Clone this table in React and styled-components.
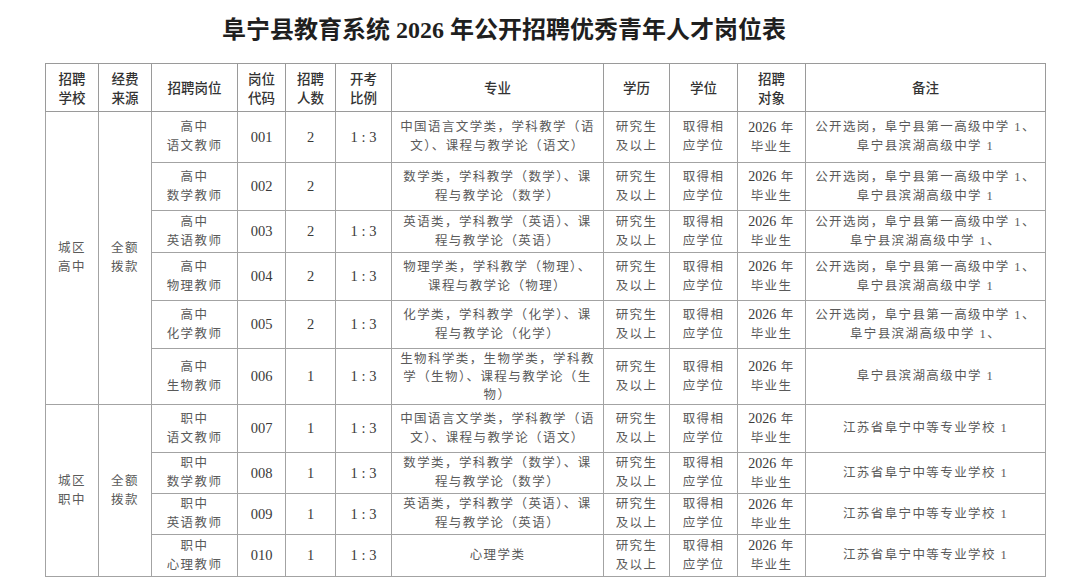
import React from 'react';
import styled, { createGlobalStyle } from 'styled-components';

const GlobalStyle = createGlobalStyle`
  html, body {
    margin: 0;
    padding: 0;
    background: #ffffff;
  }
  body {
    font-family: "Liberation Serif", "Noto Sans CJK SC", serif;
  }
`;

const Page = styled.div`
  width: 1080px;
  height: 586px;
  overflow: hidden;
  background: #fff;
`;

const Title = styled.h1`
  margin: 0;
  box-sizing: border-box;
  height: 63px;
  padding: 17px 0 0 222px;
  font-family: "Liberation Serif", "Noto Sans CJK SC", serif;
  font-size: 24px;
  line-height: 26px;
  font-weight: 700;
  color: #1f1f1f;
  white-space: nowrap;
`;

const Table = styled.table`
  margin-left: 45px;
  width: 1000px;
  border-collapse: collapse;
  table-layout: fixed;
  border: 1px solid #8c8c8c;
`;

const HeadCell = styled.th`
  border: 1px solid #9a9a9a;
  padding: 0 2px;
  font-family: "Noto Sans CJK SC", sans-serif;
  font-size: 13.5px;
  font-weight: 500;
  line-height: 19px;
  color: #333;
  text-align: center;
  vertical-align: middle;
  white-space: pre-line;
`;

const Cell = styled.td`
  border: 1px solid #a3a3a3;
  padding: 0 2px;
  font-family: "Liberation Serif", "Noto Sans CJK SC", serif;
  font-size: 12.5px;
  letter-spacing: 1.4px;
  line-height: ${p => p.$tight ? '18px' : '19px'};
  color: #5a5a5a;
  text-align: center;
  vertical-align: middle;
  white-space: pre-line;
`;

const Num = styled.td`
  border: 1px solid #a3a3a3;
  padding: 0;
  font-family: "Liberation Serif", serif;
  font-size: 14.5px;
  color: #3a3a3a;
  text-align: center;
  vertical-align: middle;
  white-space: nowrap;
`;

const Year = styled.span`
  font-family: "Liberation Serif", serif;
  font-size: 14px;
  letter-spacing: 0;
  color: #3a3a3a;
`;

const Row = styled.tr`
  height: ${p => p.$h}px;
`;

const widths = [53, 53, 86, 48, 50, 56, 212, 66, 68, 68, 240];

const headers = [
  '招聘\n学校', '经费\n来源', '招聘岗位', '岗位\n代码', '招聘\n人数', '开考\n比例',
  '专业', '学历', '学位', '招聘\n对象', '备注',
];

const CHINESE = '中国语言文学类，学科教学（语\n文）、课程与教学论（语文）';
const MATH = '数学类，学科教学（数学）、课\n程与教学论（数学）';
const ENGLISH = '英语类，学科教学（英语）、课\n程与教学论（英语）';
const NOTE_A = '公开选岗，阜宁县第一高级中学 1、\n阜宁县滨湖高级中学 1';
const NOTE_B = '公开选岗，阜宁县第一高级中学 1、\n阜宁县滨湖高级中学 1、';
const NOTE_VOC = '江苏省阜宁中等专业学校 1';

const groups = [
  {
    school: '城区\n高中',
    fund: '全额\n拨款',
    rows: [
      { post: '高中\n语文教师', code: '001', num: '2', ratio: '1 : 3', major: CHINESE, note: NOTE_A, h: 51 },
      { post: '高中\n数学教师', code: '002', num: '2', ratio: '', major: MATH, note: NOTE_A, h: 48 },
      { post: '高中\n英语教师', code: '003', num: '2', ratio: '1 : 3', major: ENGLISH, note: NOTE_B, h: 42 },
      { post: '高中\n物理教师', code: '004', num: '2', ratio: '1 : 3', major: '物理学类，学科教学（物理）、\n课程与教学论（物理）', note: NOTE_A, h: 48 },
      { post: '高中\n化学教师', code: '005', num: '2', ratio: '1 : 3', major: '化学类，学科教学（化学）、课\n程与教学论（化学）', note: NOTE_B, h: 48 },
      { post: '高中\n生物教师', code: '006', num: '1', ratio: '1 : 3', major: '生物科学类，生物学类，学科教\n学（生物）、课程与教学论（生\n物）', note: '阜宁县滨湖高级中学 1', h: 56, tight: true },
    ],
  },
  {
    school: '城区\n职中',
    fund: '全额\n拨款',
    rows: [
      { post: '职中\n语文教师', code: '007', num: '1', ratio: '1 : 3', major: CHINESE, note: NOTE_VOC, h: 48 },
      { post: '职中\n数学教师', code: '008', num: '1', ratio: '1 : 3', major: MATH, note: NOTE_VOC, h: 41 },
      { post: '职中\n英语教师', code: '009', num: '1', ratio: '1 : 3', major: ENGLISH, note: NOTE_VOC, h: 41 },
      { post: '职中\n心理教师', code: '010', num: '1', ratio: '1 : 3', major: '心理学类', note: NOTE_VOC, h: 42 },
    ],
  },
];

export default function App() {
  return (
    <Page>
      <GlobalStyle />
      <Title>阜宁县教育系统 2026 年公开招聘优秀青年人才岗位表</Title>
      <Table>
        <colgroup>
          {widths.map((w, i) => <col key={i} style={{ width: w }} />)}
        </colgroup>
        <thead>
          <Row $h={48}>
            {headers.map(h => <HeadCell key={h}>{h}</HeadCell>)}
          </Row>
        </thead>
        <tbody>
          {groups.map(g => g.rows.map((r, i) => (
            <Row key={r.code} $h={r.h}>
              {i === 0 && <Cell rowSpan={g.rows.length}>{g.school}</Cell>}
              {i === 0 && <Cell rowSpan={g.rows.length}>{g.fund}</Cell>}
              <Cell>{r.post}</Cell>
              <Num>{r.code}</Num>
              <Num>{r.num}</Num>
              <Num>{r.ratio}</Num>
              <Cell $tight={r.tight}>{r.major}</Cell>
              <Cell>{'研究生\n及以上'}</Cell>
              <Cell>{'取得相\n应学位'}</Cell>
              <Cell><Year>2026</Year> 年{'\n'}毕业生</Cell>
              <Cell>{r.note}</Cell>
            </Row>
          )))}
        </tbody>
      </Table>
    </Page>
  );
}
